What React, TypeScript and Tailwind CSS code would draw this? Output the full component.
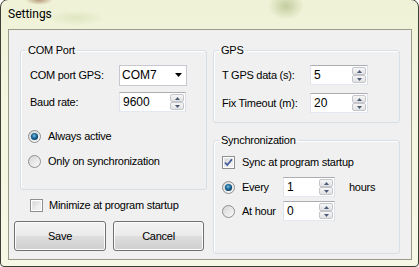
import React, { useId } from "react";

const font = "font-['Microsoft_Sans_Serif','Liberation_Sans',Arial,sans-serif] text-[11px] leading-[13px] tracking-[-0.25px] text-black";

function Radio({ checked }: { checked?: boolean }) {
	const id = useId();
	return (
		<svg width="13" height="13" viewBox="0 0 13 13" className="shrink-0">
			<defs>
				<linearGradient id={id + "a"} x1="0" y1="0" x2="1" y2="1">
					<stop offset="0" stopColor="#d4d4d4" />
					<stop offset="1" stopColor="#fbfbfb" />
				</linearGradient>
				<radialGradient id={id + "b"} cx="0.45" cy="0.4" r="0.6">
					<stop offset="0" stopColor="#7fc6ea" />
					<stop offset="0.5" stopColor="#1f6c9c" />
					<stop offset="1" stopColor="#0b3d64" />
				</radialGradient>
			</defs>
			<circle cx="6.5" cy="6.5" r="6" fill={`url(#${id}a)`} stroke="#8e8f8f" />
			{checked && <circle cx="6.5" cy="6.5" r="3.6" fill={`url(#${id}b)`} />}
		</svg>
	);
}

function Check({ checked }: { checked?: boolean }) {
	const id = useId();
	return (
		<svg width="13" height="13" viewBox="0 0 13 13" className="shrink-0">
			<defs>
				<linearGradient id={id} x1="0" y1="0" x2="1" y2="1">
					<stop offset="0" stopColor="#d6d6d6" />
					<stop offset="1" stopColor="#fafafa" />
				</linearGradient>
			</defs>
			<rect x="0.5" y="0.5" width="12" height="12" fill="#fff" stroke="#8e8f8f" />
			<rect x="2.5" y="2.5" width="8" height="8" fill={`url(#${id})`} stroke="#e0e0e0" strokeWidth="0.5" />
			{checked && <path d="M3 6.5 L5.3 9 L10 3.3" fill="none" stroke="#41589a" strokeWidth="1.8" />}
		</svg>
	);
}

function SpinBox({ value, width }: { value: string; width: string }) {
	return (
		<div className={`flex h-[20px] ${width} bg-white border border-[#abadb3] border-l-[#e2e3ea] border-r-[#dbdfe6] border-b-[#e3e9ef] text-[12px] tracking-normal`}>
			<div className="flex-1 pl-[3px] flex items-center">{value}</div>
			<div className="flex flex-col w-[15px] py-px pr-px gap-0">
				<div className="flex-1 flex items-center justify-center border border-[#c4c6cc] rounded-[2px] bg-[linear-gradient(#f6f6f6,#e2e2e2)]">
					<svg width="5" height="3" viewBox="0 0 5 3"><path d="M0 3 L2.5 0 L5 3Z" fill="#4c5b78" /></svg>
				</div>
				<div className="flex-1 flex items-center justify-center border border-[#c4c6cc] rounded-[2px] bg-[linear-gradient(#f6f6f6,#e2e2e2)]">
					<svg width="5" height="3" viewBox="0 0 5 3"><path d="M0 0 L2.5 3 L5 0Z" fill="#4c5b78" /></svg>
				</div>
			</div>
		</div>
	);
}

function Button({ label, width }: { label: string; width: string }) {
	return (
		<button
			type="button"
			className={`${width} h-[30px] rounded-[3px] border border-[#707070] shadow-[inset_0_0_0_1px_#fcfcfc] bg-[linear-gradient(#f2f2f2_0%,#ebebeb_48%,#dddddd_52%,#cfcfcf_100%)]`}
		>
			{label}
		</button>
	);
}

export default function App() {
	return (
		<div className={`w-[419px] h-[267px] overflow-hidden bg-white ${font}`}>
			<div className="flex flex-col w-[419px] h-[268px] -mt-px rounded-t-[8px] rounded-b-[4px] border border-[#3c3f36] bg-[linear-gradient(180deg,#eff2d6_0%,#f4f6e0_35%,#f7f8e6_100%)]">
				{/* title bar */}
				<div className="h-[29px] flex items-center pl-[7px] font-['Segoe_UI',Roboto,sans-serif] text-[12px] tracking-normal bg-[radial-gradient(ellipse_18px_14px_at_285px_6px,#c3cc9f,transparent),radial-gradient(ellipse_14px_5px_at_38px_0px,#b89a7a,transparent),radial-gradient(ellipse_30px_8px_at_75px_18px,#dfe6c2,transparent)]">
					Settings
				</div>

				{/* client area */}
				<div className="flex ml-[7px] mr-[6px] h-[231px] border border-[#9a9c8a] bg-[#f0f0f0] pl-[5px] pr-[11px] gap-[6px]">
					{/* left column */}
					<div className="flex flex-col w-[193px]">
						<fieldset className="mt-[13px] ml-[6px] w-[187px] h-[147px] border border-[#d5dfe5] rounded-[3px] shadow-[inset_1px_1px_0_#fff] pl-[9px] pt-[8px]">
							<legend className="-ml-[4px] px-[2px] leading-[14px]">COM Port</legend>
							<div className="flex items-center h-[20px]">
								<span className="w-[89px]">COM port GPS:</span>
								<div className="flex items-center w-[68px] h-[21px] bg-white border border-[#c5c8cf] pl-[2px] text-[12px] tracking-normal">
									<span className="flex-1">COM7</span>
									<svg width="7" height="4" viewBox="0 0 7 4" className="mr-[4px]"><path d="M0 0 L7 0 L3.5 4Z" fill="#000" /></svg>
								</div>
							</div>
							<div className="flex items-center mt-[7px]">
								<span className="w-[89px]">Baud rate:</span>
								<SpinBox value="9600" width="w-[67px]" />
							</div>
							<div className="flex items-center gap-[7px] h-[16px] mt-[16px] -ml-[2px]">
								<Radio checked />
								<span>Always active</span>
							</div>
							<div className="flex items-center gap-[7px] h-[16px] mt-[9px] -ml-[2px]">
								<Radio />
								<span>Only on synchronization</span>
							</div>
						</fieldset>
						<div className="flex items-center gap-[6px] h-[16px] mt-[7px] ml-[16px]">
							<Check />
							<span>Minimize at program startup</span>
						</div>
						<div className="flex gap-[7px] mt-[8px]">
							<Button label="Save" width="w-[92px]" />
							<Button label="Cancel" width="w-[91px]" />
						</div>
					</div>

					{/* right column */}
					<div className="flex flex-col w-[187px]">
						<fieldset className="mt-[13px] w-[187px] h-[80px] border border-[#d5dfe5] rounded-[3px] shadow-[inset_1px_1px_0_#fff] pl-[8px] pt-[8px]">
							<legend className="-ml-[3px] px-[2px] leading-[14px]">GPS</legend>
							<div className="flex items-center">
								<span className="w-[88px]">T GPS data (s):</span>
								<SpinBox value="5" width="w-[58px]" />
							</div>
							<div className="flex items-center mt-[8px]">
								<span className="w-[88px]">Fix Timeout (m):</span>
								<SpinBox value="20" width="w-[58px]" />
							</div>
						</fieldset>
						<fieldset className="mt-[10px] w-[187px] h-[121px] border border-[#d5dfe5] rounded-[3px] shadow-[inset_1px_1px_0_#fff] pl-[8px] pt-[7px]">
							<legend className="-ml-[3px] px-[2px] leading-[14px]">Synchronization</legend>
							<div className="flex items-center gap-[7px] h-[16px]">
								<Check checked />
								<span>Sync at program startup</span>
							</div>
							<div className="flex items-center mt-[7px]">
								<Radio checked />
								<span className="ml-[7px] w-[41px]">Every</span>
								<SpinBox value="1" width="w-[52px]" />
								<span className="ml-[14px]">hours</span>
							</div>
							<div className="flex items-center mt-[4px]">
								<Radio />
								<span className="ml-[7px] w-[41px]">At hour</span>
								<SpinBox value="0" width="w-[52px]" />
							</div>
						</fieldset>
					</div>
				</div>
			</div>
		</div>
	);
}
